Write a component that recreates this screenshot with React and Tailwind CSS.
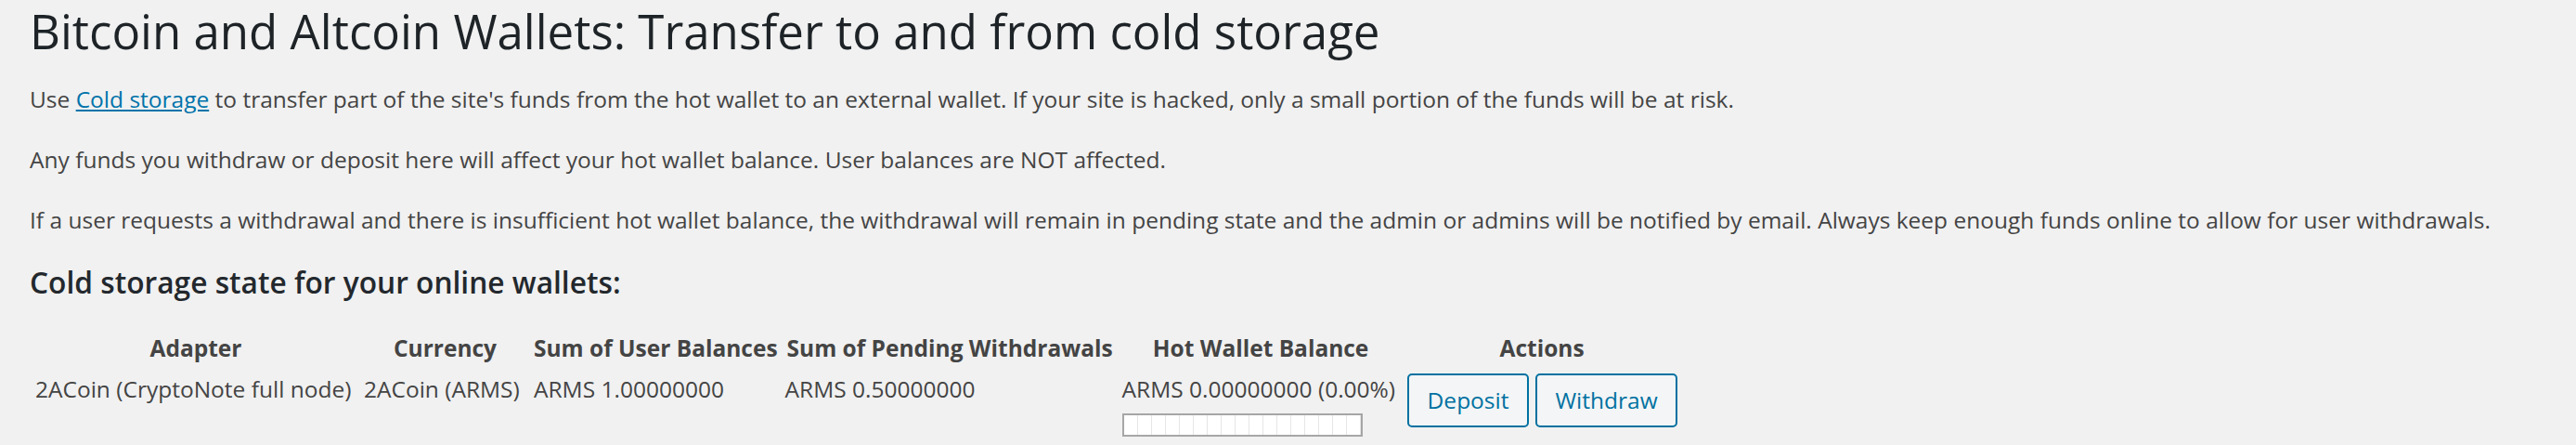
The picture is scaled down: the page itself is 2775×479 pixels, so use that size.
const COLUMNS = [
  { label: 'Adapter', width: 'w-[350px]' },
  { label: 'Currency', width: 'w-[179px]' },
  { label: 'Sum of User Balances', width: 'w-[264px]' },
  { label: 'Sum of Pending Withdrawals', width: 'w-[359px]' },
  { label: 'Hot Wallet Balance', width: 'w-[303px]' },
  { label: 'Actions', width: '' },
];

const WALLETS = [
  {
    adapter: '2ACoin (CryptoNote full node)',
    currency: '2ACoin (ARMS)',
    userBalances: 'ARMS 1.00000000',
    pending: 'ARMS 0.50000000',
    hot: 'ARMS 0.00000000 (0.00%)',
    percent: 0,
  },
];

function SegmentBar({ percent }) {
  return (
    <div className="relative mt-[9px] flex h-[25px] w-[259px] border-2 border-[#a6a6a6] bg-white">
      {Array.from({ length: 17 }).map((_, i) => (
        <div key={i} className="h-full flex-1 border-r border-[#e6e6e6] last:border-r-0" />
      ))}
      <div className="absolute left-0 top-0 h-full bg-[#06b025]" style={{ width: `${percent}%` }} />
    </div>
  );
}

export default function App() {
  return (
    <div className="min-h-screen bg-[#f1f1f1] pl-[32px] pt-[3px] font-['Open_Sans',sans-serif] text-[#444]">
      <h1 className="text-[51px] leading-[60px] font-normal text-[#1d2327]">
        Bitcoin and Altcoin Wallets: Transfer to and from cold storage
      </h1>

      <div className="mt-[27px] space-y-[31px] text-[24.5px] leading-[34px]">
        <p>
          Use{' '}
          <a href="#" className="text-[#0073aa] underline">Cold storage</a>{' '}
          to transfer part of the site's funds from the hot wallet to an external wallet. If your site is hacked, only a small portion of the funds will be at risk.
        </p>
        <p>Any funds you withdraw or deposit here will affect your hot wallet balance. User balances are NOT affected.</p>
        <p>
          If a user requests a withdrawal and there is insufficient hot wallet balance, the withdrawal will remain in pending state and the admin or admins will be notified by email. Always keep enough funds online to allow for user withdrawals.
        </p>
      </div>

      <h2 className="mt-[28px] text-[31.7px] leading-[44px] font-semibold text-[#23282d]">
        Cold storage state for your online wallets:
      </h2>

      <table className="mt-[28px] border-separate border-spacing-[4px] whitespace-nowrap text-[24.5px] leading-[34px]">
        <thead>
          <tr>
            {COLUMNS.map((c) => (
              <th key={c.label} className={`${c.width} px-[2px] text-center font-bold text-[#444]`}>{c.label}</th>
            ))}
          </tr>
        </thead>
        <tbody>
          {WALLETS.map((w) => (
            <tr key={w.adapter}>
              <td className="px-[2px] pt-[6px] align-top">{w.adapter}</td>
              <td className="px-[2px] pt-[6px] align-top">{w.currency}</td>
              <td className="px-[2px] pt-[6px] align-top">{w.userBalances}</td>
              <td className="px-[2px] pt-[6px] align-top">{w.pending}</td>
              <td className="px-[2px] pt-[6px] align-top">
                <div>{w.hot}</div>
                <SegmentBar percent={w.percent} />
              </td>
              <td className="px-[2px] pt-[6px] align-top">
                <div className="flex gap-[7px]">
                  <button className="h-[58px] rounded-[5px] border-2 border-[#0071a1] bg-[#f3f5f6] px-[20px] text-[#0071a1]">
                    Deposit
                  </button>
                  <button className="h-[58px] rounded-[5px] border-2 border-[#0071a1] bg-[#f3f5f6] px-[19px] text-[#0071a1]">
                    Withdraw
                  </button>
                </div>
              </td>
            </tr>
          ))}
        </tbody>
      </table>
    </div>
  );
}
